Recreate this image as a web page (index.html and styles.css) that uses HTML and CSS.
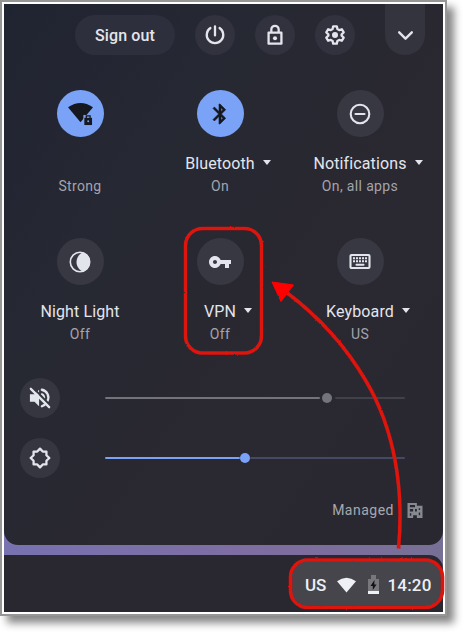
FILE: index.html
```html
<!DOCTYPE html>
<html lang="en">
<head>
<meta charset="utf-8">
<title>Quick settings</title>
<link rel="stylesheet" href="styles.css">
</head>
<body>
<main class="frame">
  <section class="panel">
    <header class="toolbar">
      <button class="signout">Sign out</button>
      <button class="round"><svg viewBox="0 0 24 24"><path class="line" d="M12 2.500v10M7 4.400a9 9 0 1 0 10 0"/></svg></button>
      <button class="round"><svg viewBox="0 0 24 24"><path class="line" d="M5 9.500h14v12H5zM8 9V6a4 4 0 0 1 8 0v3"/><circle cx="12" cy="15.500" r="2.200"/></svg></button>
      <button class="round"><svg class="gear" viewBox="0 0 24 24"><path class="line" d="M10 2.500h4l.6 3 2 1.200 2.900-1 2 3.500-2.300 2v1.600l2.300 2-2 3.500-2.900-1-2 1.200-.6 3h-4l-.6-3-2-1.200-2.900 1-2-3.500 2.300-2v-1.600l-2.300-2 2-3.500 2.900 1 2-1.200z"/><circle cx="12" cy="12" r="3.300"/></svg></button>
      <button class="collapse"><svg viewBox="0 0 24 24"><path class="line" d="M4 8l8 8 8-8"/></svg></button>
    </header>
    <div class="tiles">
      <div class="tile">
        <div class="disc on"><svg class="wifi" viewBox="0 0 26 26"><path d="M0 6.500Q13-2.500 26 6.500L13 22z"/><path class="gap" d="M16 14.500H26V26H16z"/><path d="M17 17.500h8V25h-8z"/><path class="shackle" d="M19 18v-2.500h4V18"/><circle class="hole" cx="21" cy="21" r="1"/></svg></div>
        <div class="name"></div><div class="state">Strong</div>
      </div>
      <div class="tile">
        <div class="disc on"><svg viewBox="0 0 24 24"><path d="M17.710 7.710L12 2h-1v7.590L6.410 5 5 6.410 10.590 12 5 17.590 6.410 19 11 14.410V22h1l5.710-5.710-4.300-4.290 4.300-4.290zM13 5.830l1.880 1.880L13 9.590V5.830zm1.880 10.460L13 18.170v-3.760l1.880 1.880z" stroke="currentColor" stroke-width=".6"/></svg></div>
        <div class="name">Bluetooth<i class="caret"></i></div><div class="state">On</div>
      </div>
      <div class="tile">
        <div class="disc"><svg viewBox="0 0 24 24"><circle class="line thin" cx="12" cy="12" r="9.300"/><path class="line thin" d="M7.500 12h9"/></svg></div>
        <div class="name">Notifications<i class="caret"></i></div><div class="state">On, all apps</div>
      </div>
      <div class="tile">
        <div class="disc"><svg viewBox="0 0 24 24"><circle class="line ring" cx="12" cy="12" r="9.700"/><path d="M15 2.500a10 10 0 0 1 0 19c-3.500-1-6.500-5-6.500-9.500s3-8.500 6.500-9.500z"/></svg></div>
        <div class="name">Night Light</div><div class="state">Off</div>
      </div>
      <div class="tile">
        <div class="disc"><svg class="key" viewBox="0 0 24 24"><path d="M12.650 10C11.830 7.670 9.610 6 7 6c-3.310 0-6 2.690-6 6s2.690 6 6 6c2.610 0 4.830-1.670 5.650-4H17v4h4v-4h2v-4H12.650zM7 14c-1.100 0-2-.9-2-2s.9-2 2-2 2 .9 2 2-.9 2-2 2z"/></svg></div>
        <div class="name">VPN<i class="caret"></i></div><div class="state">Off</div>
      </div>
      <div class="tile">
        <div class="disc"><svg viewBox="0 0 24 24"><rect class="line thin" x="2.500" y="5" width="19" height="13" rx="1"/><path class="keys" d="M5 8.300h14M5 11.300h14"/><path class="line thin" d="M8.500 14.700h7"/></svg></div>
        <div class="name">Keyboard<i class="caret"></i></div><div class="state">US</div>
      </div>
    </div>
    <div class="slider volume">
      <button class="round"><svg viewBox="0 0 24 24"><path d="M1 8h5l5-5v18l-5-5H1z"/><path class="line" d="M14 3a8.500 8.500 0 0 1 6 12.500M14 8q2.500 1.300 2.400 4M14 21l3-1.500"/><path class="slash" d="M3.500 0L24 20.500"/><path class="line" d="M2 2l20 20"/></svg></button>
      <div class="track"><span class="fill"></span><b></b><span class="rest"></span></div>
    </div>
    <div class="slider brightness">
      <button class="round"><svg viewBox="0 0 24 24"><path class="line" d="M12 1.800l3 3.200h4v4l3.200 3-3.200 3v4h-4L12 22.200 9 19H5v-4l-3.200-3L5 9V5h4z"/></svg></button>
      <div class="track"><span class="fill"></span><b></b><span class="rest"></span></div>
    </div>
    <footer class="managed"><span>Managed</span><svg viewBox="0 0 16 16"><path fill-rule="evenodd" d="M0 0h10v3h6v13h-6v-3H6v3H0zM2.500 2v2.500H8V2zM2.500 6.500V9H6V6.500zM2.500 11v2.500H4V11zM8 6.500V9h2V6.500zM12 5.500v2h1.500v-2zM12 10v3h1.500v-3z"/></svg></footer>
  </section>
  <section class="shelf">
    <div class="tray"><span>US</span><svg class="signal" viewBox="0 0 20 16"><path d="M0 4Q10-3.500 20 4L10 16z"/></svg><svg class="battery" viewBox="0 0 12 20"><path fill="#77777c" d="M3 0h5v4h3v12H0V4h3z"/><path fill="#eef0f6" d="M0 16h11v3H0z"/><path fill="#111216" d="M6.500 5L2.500 11h2.300v4L8.500 9.500H6.300z"/></svg><span class="clock">14:20</span></div>
  </section>
  <svg class="marks" viewBox="0 0 447 616">
    <defs><filter id="rough" x="-10%" y="-10%" width="120%" height="120%"><feTurbulence type="fractalNoise" baseFrequency=".35" numOctaves="2" seed="3"/><feDisplacementMap in="SourceGraphic" scale="1.800" xChannelSelector="R" yChannelSelector="G"/></filter></defs>
    <g filter="url(#rough)">
      <rect x="185.500" y="228.500" width="76" height="124.500" rx="17"/>
      <rect x="290.500" y="560" width="152" height="47.500" rx="17"/>
      <path d="M286 292C318 316 345 345 366 381C395 430 404 490 398.500 548.500"/>
      <path class="head" d="M272 282L293.500 285L281 301.500z"/>
    </g>
  </svg>
</main>
</body>
</html>
```
FILE: styles.css
```css
* { box-sizing: border-box; }
html { height: 632px; background: #fff; }
body { margin: 0; height: 632px; font-family: Roboto, sans-serif; }
.frame {
  position: relative; width: 447px; height: 616px;
  border: 2px solid #969696; padding: 2px; background: #fff;
  box-shadow: 7px 7px 8px rgba(0, 0, 0, .48);
}
.frame::before { content: ""; position: absolute; inset: 2px; background: linear-gradient(90deg, #7872b1, #7e6da0 60%, #777095); }
.panel {
  position: relative; height: 541px; border-radius: 0 0 14px 14px; color: #e3e5ed;
  background: linear-gradient(125deg, #202431 0%, #262833 30%, #2a2831 60%, #292831 100%);
}
button { border: 0; padding: 0; margin: 0; font: inherit; color: inherit; }
svg { display: block; fill: currentColor; overflow: visible; }
.line { fill: none; stroke: currentColor; stroke-width: 2.5; stroke-linejoin: round; stroke-linecap: round; }
.thin { stroke-width: 2.1; }
.ring { stroke-width: 1.6; }
.toolbar { display: flex; align-items: flex-start; gap: 20px; padding-left: 71px; height: 86px; }
.signout { width: 100px; height: 40px; margin-top: 11px; border-radius: 20px; background: #2d303c; font-size: 16px; font-weight: 500; letter-spacing: .1px; }
.round { display: grid; place-items: center; flex: none; width: 40px; height: 40px; border-radius: 50%; background: #363640; }
.toolbar .round { margin-top: 11px; background: #31323d; }
.round svg { width: 22px; height: 22px; }
.collapse { display: grid; place-items: center; width: 40px; height: 51px; padding-top: 11px; margin-left: 10px; border-radius: 0 0 20px 20px; background: #34343e; }
.collapse svg { width: 19px; height: 19px; }
.collapse .line { stroke-width: 3; }
.tiles { display: grid; grid-template-columns: repeat(3, 140px); grid-auto-rows: 148px; padding-left: 6px; }
.tile { display: flex; flex-direction: column; align-items: center; }
.disc { display: grid; place-items: center; width: 47px; height: 47px; margin-bottom: 1px; border-radius: 50%; background: #383842; }
.disc.on { background: #7aa3f7; color: #15181f; }
.disc svg { width: 24px; height: 24px; }
.disc .wifi { width: 25px; height: 25px; }
.gap { fill: #7aa3f7; }
.shackle { fill: none; stroke: #15181f; stroke-width: 1.3; }
.hole { fill: #7aa3f7; }
.keys { fill: none; stroke: currentColor; stroke-width: 2; stroke-dasharray: 2 1; }
.slash { fill: none; stroke: #363640; stroke-width: 2; }
.name { position: relative; height: 24px; margin-top: 14px; font-size: 16px; line-height: 24px; letter-spacing: .12px; white-space: nowrap; }
.caret { position: absolute; left: calc(100% + 8px); top: 8px; border: 4px solid transparent; border-top: 5px solid #e3e5ed; border-bottom: 0; }
.state { font-size: 14px; line-height: 21px; letter-spacing: .35px; color: #a3a4ac; }
.slider { display: flex; align-items: center; height: 40px; padding-left: 16px; }
.volume { margin-bottom: 20px; margin-top: -8px; }
.track { display: flex; align-items: center; width: 300px; margin-left: 45px; }
.track b { width: 10px; height: 10px; border-radius: 50%; background: #73747c; }
.fill, .rest { height: 2px; border-radius: 1px; background: #73747b; }
.volume .fill { width: 215px; margin-right: 2px; }
.volume .rest { flex: 1; margin-left: 3px; background: #414149; }
.brightness .fill { width: 135px; background: #7aa3f7; }
.brightness .track b { background: #7aa3f7; }
.brightness .rest { flex: 1; background: #454962; }
.managed { display: flex; justify-content: flex-end; align-items: center; gap: 13px; height: 20px; margin-top: 22px; padding-right: 20px; font-size: 14px; letter-spacing: .5px; color: #a7a8af; }
.managed svg { width: 16px; height: 15px; color: #858a92; }
.shelf { position: relative; height: 57px; margin-top: 10px; padding: 5px 0 0 287px; border-radius: 0 14px 0 0; background: #292831; }
.tray { display: flex; align-items: center; width: 152px; height: 48px; padding: 2px 0 0 14px; border-radius: 17px; background: #45454b; color: #eef0f6; font-size: 17px; font-weight: 500; }
.signal { width: 19px; height: 16px; margin-left: 11px; }
.battery { width: 12px; height: 20px; margin: 0 7px 0 12px; }
.clock { letter-spacing: .2px; }
.marks { position: absolute; left: -2px; top: -2px; width: 447px; height: 616px; fill: none; stroke: #dd120f; stroke-width: 3.6; pointer-events: none; }
.head { fill: #f00; stroke: #f00; stroke-width: 1; }
```
